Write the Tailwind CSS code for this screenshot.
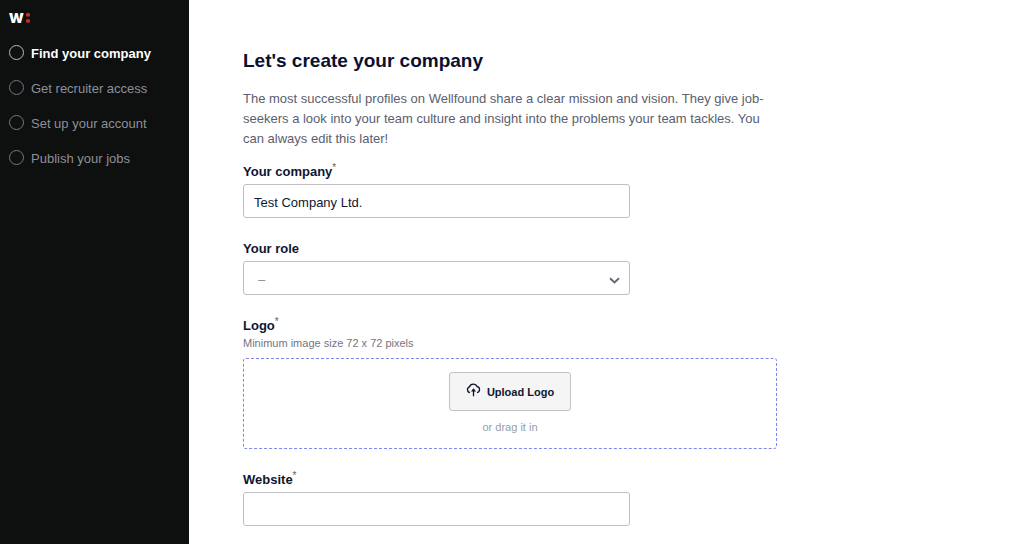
<!DOCTYPE html>
<html lang="en">
<head>
<meta charset="utf-8">
<meta name="viewport" content="width=device-width, initial-scale=1">
<title>Create your company</title>
<script src="https://cdn.jsdelivr.net/npm/@tailwindcss/browser@4"></script>
</head>
<body class="flex min-h-screen bg-white font-['Liberation_Sans',sans-serif] text-[13px] leading-5 text-[#0f1630]">
<aside class="w-[189px] shrink-0 bg-[#0d100f] px-[9px] pt-[9px]">
  <a href="#" aria-label="Wellfound" class="flex h-5 items-start gap-[2px] text-white">
    <span class="font-['Inter',sans-serif] text-[17px] leading-4 font-extrabold">w</span>
    <svg class="mt-1 h-[10px] w-1" viewBox="0 0 4 10" fill="#d02a1c"><rect x="0" y="0" width="4" height="3.6" rx="1.2"/><rect x="0" y="6.2" width="4" height="3.6" rx="1.2"/></svg>
  </a>
  <nav class="mt-[14px]">
    <ol class="flex flex-col gap-[13px] leading-[22px] text-[#8d8f9c]">
      <li><a href="#" aria-current="step" class="flex items-start gap-[7px] font-bold text-white"><span class="mt-[2px] size-[15px] rounded-full border border-[#b9bbc4]"></span>Find your company</a></li>
      <li><a href="#" class="flex items-start gap-[7px]"><span class="mt-[2px] size-[15px] rounded-full border border-[#747686]"></span>Get recruiter access</a></li>
      <li><a href="#" class="flex items-start gap-[7px]"><span class="mt-[2px] size-[15px] rounded-full border border-[#747686]"></span>Set up your account</a></li>
      <li><a href="#" class="flex items-start gap-[7px]"><span class="mt-[2px] size-[15px] rounded-full border border-[#747686]"></span>Publish your jobs</a></li>
    </ol>
  </nav>
</aside>
<main class="min-w-0 flex-1 px-[54px] pt-12 pb-[18px]">
  <form class="max-w-[534px]">
    <h1 class="text-[19px] leading-[26px] font-bold text-[#0a1030]">Let's create your company</h1>
    <p class="mt-[15px] max-w-[530px] text-[#5b5e6e]">The most successful profiles on Wellfound share a clear mission and vision. They give job-seekers a look into your team culture and insight into the problems your team tackles. You can always edit this later!</p>
    <div class="mt-3 flex flex-col gap-5 leading-[22px]">
      <div class="flex max-w-[387px] flex-col gap-px">
        <label for="company" class="font-bold">Your company<sup class="text-[10px] font-normal text-[#5b5e6e]">*</sup></label>
        <input id="company" type="text" value="Test Company Ltd." class="h-[34px] w-full rounded-[3px] border border-[#bfbfc1] px-[10px] pt-[2px]">
      </div>
      <div class="flex max-w-[387px] flex-col gap-px">
        <label for="role" class="font-bold">Your role</label>
        <div class="relative">
          <select id="role" class="block h-[34px] w-full appearance-none rounded-[3px] border border-[#bfbfc1] bg-white px-[14px] pt-1 text-[#8b8d98]"><option>–</option></select>
          <svg class="pointer-events-none absolute top-4 right-[10px] h-[7px] w-[11px]" viewBox="0 0 11 7" fill="none" stroke="#666978" stroke-width="2"><path d="M1 1.2 5.5 5.4 10 1.2"/></svg>
        </div>
      </div>
      <div>
        <label for="logo" class="block font-bold">Logo<sup class="text-[10px] font-normal text-[#5b5e6e]">*</sup></label>
        <p class="text-[11px] leading-3 text-[#737583]">Minimum image size 72 x 72 pixels</p>
        <div class="mt-[9px] flex flex-col items-center rounded-[3px] border border-dashed border-[#7f86f2] pt-[13px] pb-[13px]">
          <button id="logo" type="button" class="flex h-[39px] items-center gap-[6px] rounded-[3px] border border-[#c2c2c4] bg-[#f5f5f5] px-4 text-[11px] font-bold">
            <svg class="mb-1 h-[14px] w-[15px]" viewBox="0 0 15 14" fill="none" stroke="#10162f" stroke-width="1.3"><path d="M4 9.6a3 3 0 0 1-.5-5.8A4 4 0 0 1 11 3.5a3.1 3.1 0 0 1 0 6.1M7.5 13.2V6.4"/><path d="M4.9 8.4 7.5 5.2l2.6 3.2z" fill="#10162f" stroke="none"/></svg>
            Upload Logo
          </button>
          <p class="mt-2 text-[11px] leading-4 text-[#9a9ba3]">or drag it in</p>
        </div>
      </div>
      <div class="flex max-w-[387px] flex-col gap-px">
        <label for="website" class="font-bold">Website<sup class="text-[10px] font-normal text-[#5b5e6e]">*</sup></label>
        <input id="website" type="text" class="h-[34px] w-full rounded-[3px] border border-[#bfbfc1] px-[10px]">
      </div>
    </div>
  </form>
</main>
</body>
</html>
